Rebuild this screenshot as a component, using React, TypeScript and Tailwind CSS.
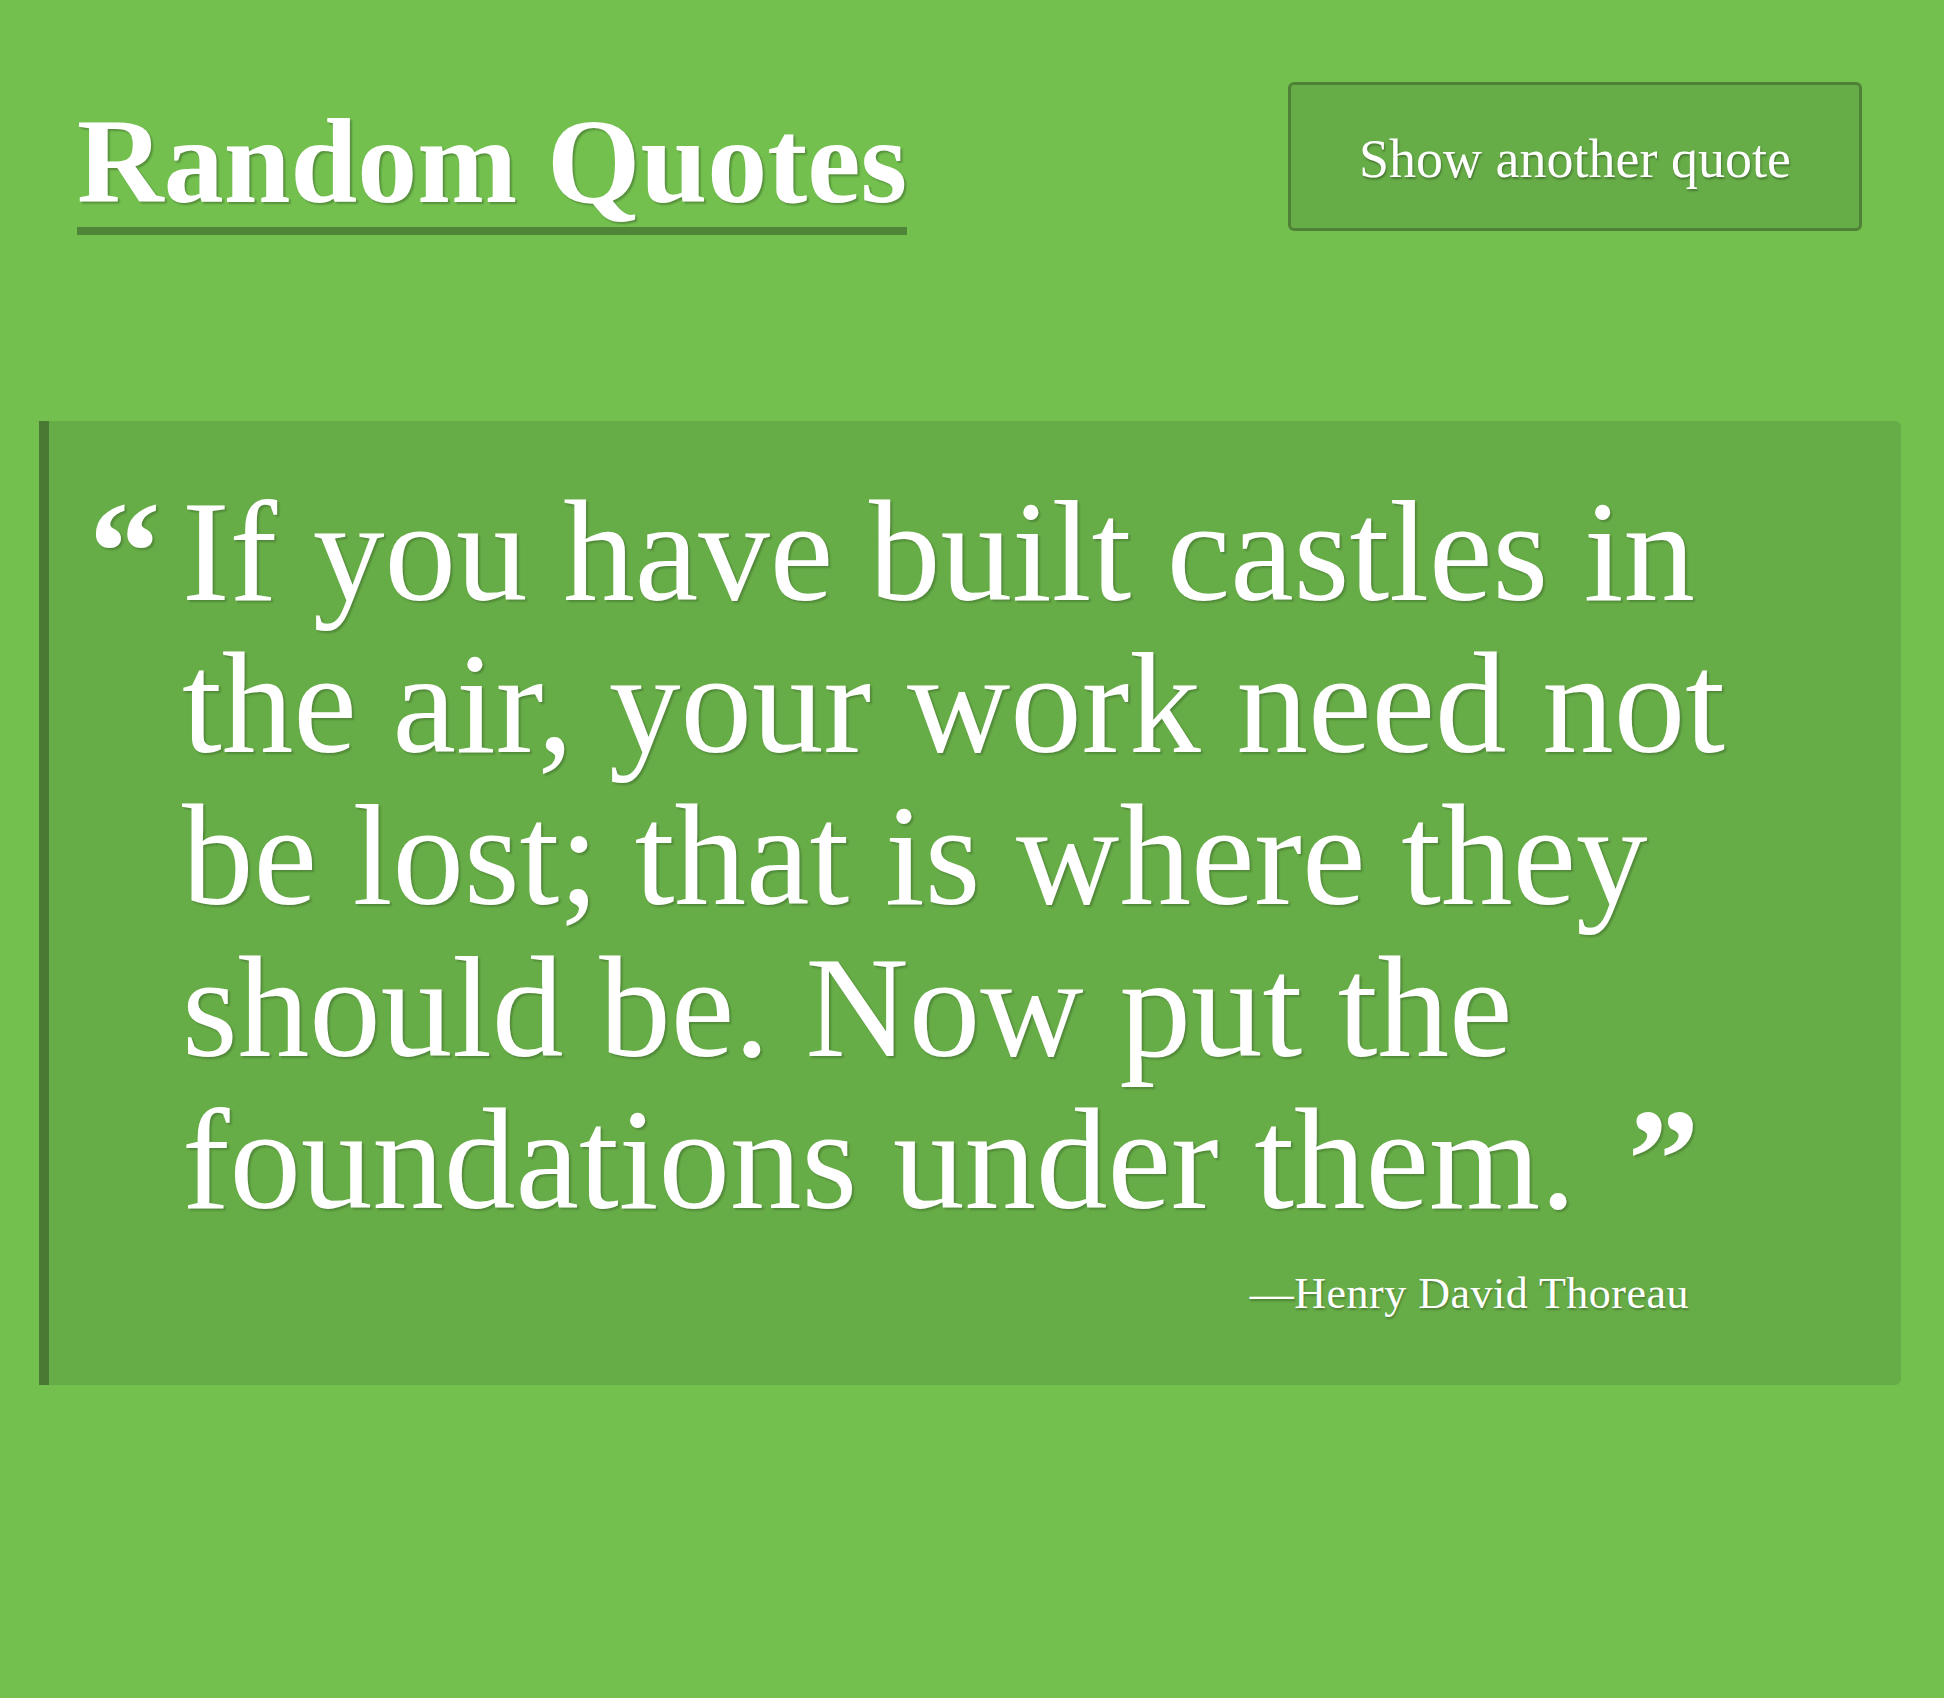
const serif = "font-['Liberation_Serif','Times_New_Roman',serif]";

const lines = [
  'If you have built castles in',
  'the air, your work need not',
  'be lost; that is where they',
  'should be. Now put the',
  'foundations under them.',
];

export default function App() {
  return (
    <div className={`min-h-screen w-full bg-[#73c04f] text-white ${serif}`}>
      <header className="flex items-start justify-between pl-[77px] pr-[82px] pt-[82px]">
        <h1 className="mt-[20px] inline-block border-b-[8px] border-[#4f8536] pb-[5px] text-[120px] font-bold leading-[120px] [text-shadow:2px_2px_2px_rgba(0,0,0,0.25)]">
          Random Quotes
        </h1>
        <button className="h-[149px] w-[574px] rounded-[6px] border-[3px] border-[#4f8236] bg-[#66ac47] pt-[6px] text-[54px] text-white [text-shadow:1px_2px_2px_rgba(0,0,0,0.3)]">
          Show another quote
        </button>
      </header>

      <main className="ml-[39px] mr-[43px] mt-[186px]">
        <blockquote className="rounded-r-[6px] border-l-[10px] border-[#4a7933] bg-[#66ac47] pb-[58px] pl-[40px] pt-[55px]">
          <div className="flex text-[143px] leading-[152px] [text-shadow:2px_2px_2px_rgba(0,0,0,0.2)]">
            <span className="w-[93px] shrink-0 font-bold">“</span>
            <p className="whitespace-nowrap">
              {lines.map((line, i) => (
                <span key={i} className="block">
                  {line}
                  {i === lines.length - 1 && <span className="ml-[16px] font-bold"> ”</span>}
                </span>
              ))}
            </p>
          </div>
          <p className="mr-[212px] mt-[25px] text-right text-[44px] leading-[66px] tracking-[0.5px] [text-shadow:1px_2px_2px_rgba(0,0,0,0.25)]">
            —Henry David Thoreau
          </p>
        </blockquote>
      </main>
    </div>
  );
}
